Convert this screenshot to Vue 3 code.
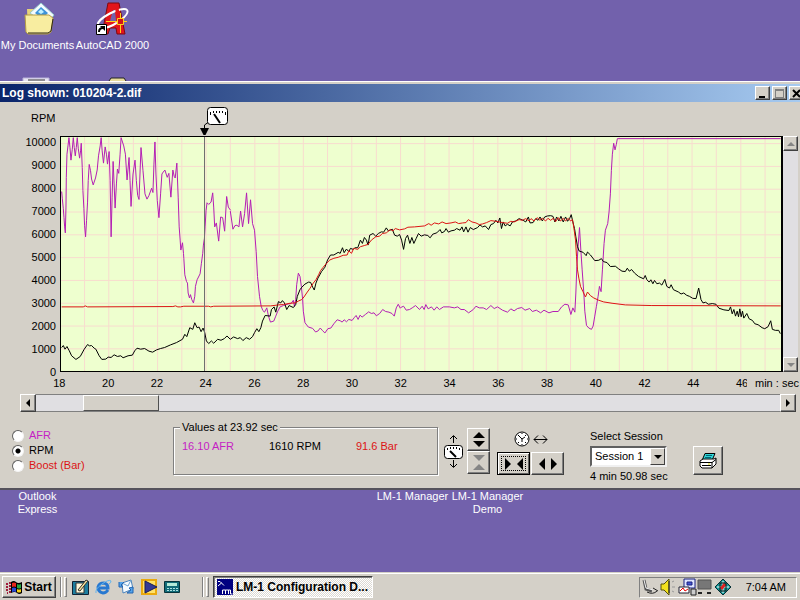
<template>
  <div class="desktop">
    <div class="icons-top">
      <a href="#" class="shortcut">
        <svg width="34" height="34" viewBox="0 0 34 34">
          <path d="M6 8h8l2 3h14v19H7z" fill="#e6d27a" />
          <path d="M9 12 20 2l13 12-8 10z" fill="#f4fbff" stroke="#9cc" />
          <path d="m14 12 6-6 7 6-6 6z" fill="#3d93d8" />
          <path d="m17 11 3-3 3 3-3 2z" fill="#bdf0ff" />
          <path d="M4 14h24l4 3-2 14-3 2H7l-2-2z" fill="#f8eda0" stroke="#b59d45" />
          <path d="M7 32h20l3-2 2-12" fill="none" stroke="#2d2712" />
        </svg>
        <span>My Documents</span>
      </a>
      <a href="#" class="shortcut">
        <svg width="34" height="34" viewBox="0 0 34 34">
          <path d="M12 2h11l6 31h-8l-1-6h-6l-2 6H6z" fill="#e3151b" stroke="#7c0b12" />
          <path d="M17 9h2l1 11h-6z" fill="#7261ac" />
          <path d="M2 25C-1 18 27 4 31 9c3 4-10 15-22 18" fill="none" stroke="#fff" stroke-width="2" />
          <path d="M13 4h9l5 28h-5l-3-26z" fill="#e3151b" />
          <path d="M24.500 12v20M10 20.500h21" stroke="#ffd21c" />
          <path d="M21.500 17.500h6v6h-6z" fill="#d0121a" stroke="#ffd21c" />
          <path d="M.5 23.500h10v10H.5z" fill="#fff" stroke="#000" />
          <path d="M3 31q0-4 4-4" fill="none" stroke="#000" stroke-width="2" />
          <path d="M4 25h5v5z" fill="#000" />
        </svg>
        <span>AutoCAD 2000</span>
      </a>
      <svg width="75" height="4" viewBox="0 0 75 4">
        <path d="M23 4V1h26v3" fill="#e8e6f4" stroke="#b9b3d8" />
        <path d="M28 3h17" stroke="#333" />
      </svg>
      <svg width="75" height="4" viewBox="0 0 75 4">
        <path d="M34 4l2-3h13l2 3" fill="#e8dc9c" stroke="#222" />
      </svg>
    </div>

    <section class="window">
      <header class="titlebar">
        <h1>Log shown: 010204-2.dif</h1>
        <button class="caption" aria-label="Minimize">
          <svg width="9" height="9"><path d="M1 7h6v2H1z" /></svg>
        </button>
        <button class="caption" aria-label="Maximize">
          <svg width="9" height="9"><path d="M0 0h9v9H0zM1 2v6h7V2z" fill-rule="evenodd" fill="#808080" /></svg>
        </button>
        <button class="caption close" aria-label="Close">
          <svg width="9" height="9"><path d="m1 1 7 7M8 1 1 8" stroke="#000" stroke-width="2" /></svg>
        </button>
      </header>

      <div class="unit">RPM</div>

      <div class="chart">
        <div class="y-axis">
          <span v-for="n in yTicks" :key="n">{{ n }}</span>
        </div>
        <div class="plot">
          <svg class="traces" viewBox="0 0 2169 708" preserveAspectRatio="none">
            <path class="grid" :d="gridPath" />
            <g v-for="trace in traces" :key="trace.name" :class="trace.name">
              <polyline
                v-for="(part, i) in trace.parts"
                :key="i"
                :points="part.points"
                :transform="`translate(${part.x} ${part.y})`"
              />
            </g>
          </svg>
          <div class="cursor" :style="{ left: cursorLeft }">
            <svg width="26" height="30" viewBox="0 0 26 30">
              <rect x="3.500" y=".5" width="20" height="17" rx="3" fill="#fff" stroke="#000" />
              <path d="M6.500 5v3M9.500 4v2M12.500 4v2M15.500 4v2M18.500 4v2M21.500 5v3" stroke="#000" />
              <path d="m10 7 6 9" stroke="#000" stroke-width="2" />
              <path d="M4 15.500.5 18v4" fill="none" stroke="#000" />
              <path d="M-4 21h9L1.500 28h-2z" />
            </svg>
          </div>
        </div>
        <div class="vscroll">
          <button aria-label="Scroll up"><i class="tri up grey"></i></button>
          <button aria-label="Scroll down"><i class="tri down grey"></i></button>
        </div>
      </div>

      <div class="x-row">
        <div class="x-axis">
          <span v-for="n in xTicks" :key="n">{{ n }}</span>
        </div>
        <span class="x-unit">min : sec</span>
      </div>

      <div class="hscroll">
        <button aria-label="Scroll left"><i class="tri left"></i></button>
        <div class="track"><div class="thumb"></div></div>
        <button aria-label="Scroll right"><i class="tri right"></i></button>
      </div>

      <div class="controls">
        <div class="channels">
          <label v-for="c in channels" :key="c.label" :class="c.color">
            <input v-model="channel" type="radio" name="channel" :value="c.label" />{{ c.label }}
          </label>
        </div>

        <fieldset class="values">
          <legend>Values at 23.92 sec</legend>
          <span class="magenta">16.10 AFR</span>
          <span>1610 RPM</span>
          <span class="red">91.6 Bar</span>
        </fieldset>

        <svg class="gauge" width="20" height="34" viewBox="0 0 20 34">
          <path d="M10.500 8V1M7 4l3.500-3.500L14 4M10.500 25v7M7 29l3.500 3.500L14 29" fill="none" stroke="#000" />
          <rect x="1.500" y="10.500" width="18" height="13" rx="3" fill="#fff" stroke="#000" />
          <path d="M4.500 13v2M7.500 12v2M10.500 12v2M13.500 12v2M16.500 13v2" stroke="#000" />
          <path d="m7 16 6 6" stroke="#000" stroke-width="2" />
        </svg>

        <div class="spin">
          <button aria-label="Expand scale"><i class="tri up big"></i><i class="tri down big"></i></button>
          <button aria-label="Compress scale" disabled>
            <i class="tri down big grey"></i><i class="tri up big grey"></i>
          </button>
        </div>

        <div class="time-zoom">
          <svg width="34" height="16" viewBox="0 0 34 16">
            <circle cx="8" cy="8" r="7" fill="#fff" stroke="#000" />
            <path d="M8 2v1M8 13v1M2 8h1M13 8h1M4 4l1 1M12 4l-1 1M4 12l1-1M12 12l-1-1" stroke="#000" />
            <path d="M5 5l3 3 3-2M8 8v3" fill="none" stroke="#000" />
            <path d="M20 8.500h13M24 4.500l-4 4 4 4M29 4.500l4 4-4 4" fill="none" stroke="#000" />
          </svg>
          <div class="pair">
            <button class="focused" aria-label="Compress time">
              <i class="tri right big"></i><i class="tri left big"></i>
            </button>
            <button aria-label="Expand time"><i class="tri left big"></i><i class="tri right big"></i></button>
          </div>
        </div>

        <div class="session">
          <label for="session">Select Session</label>
          <div class="combo">
            <select id="session" v-model="session">
              <option>Session 1</option>
            </select>
            <span class="drop"><i class="tri down"></i></span>
          </div>
          <span>4 min 50.98 sec</span>
        </div>

        <button class="print" aria-label="Print">
          <svg width="18" height="16" viewBox="0 0 18 16">
            <path d="m6 .5h10l-3 7H3z" fill="#31d5d5" stroke="#000" />
            <path d="M7 2.500h6M6 4.500h6" stroke="#067" />
            <path d="M1 8l3-2h11l2-1v6l-4 4H3l-2-2z" fill="#fff" stroke="#000" />
            <path d="M1 9.500h12l4-3M13 9v6M3 12.500h9" fill="none" stroke="#000" />
            <path d="M9 11h2" stroke="#dd0" />
          </svg>
        </button>
      </div>
    </section>

    <div class="icons-bottom">
      <a href="#" class="shortcut"><span>Outlook Express</span></a>
      <a href="#" class="shortcut manager"><span>LM-1 Manager</span></a>
      <a href="#" class="shortcut"><span>LM-1 Manager Demo</span></a>
    </div>

    <footer class="taskbar">
      <button class="start">
        <svg width="17" height="15" viewBox="0 0 17 15">
          <path d="M5 2q3-2 5 0t6 0v11q-3 2-5 0t-6 0z" fill="#000" />
          <path d="M6 3q2-1 4 0v4q-2-1-4 0z" fill="#e8261c" />
          <path d="M11 4q2 1 4 0v4q-2 1-4 0z" fill="#28a745" />
          <path d="M6 8q2-1 4 0v4q-2-1-4 0z" fill="#2649d8" />
          <path d="M11 9q2 1 4 0v3q-2 1-4 0z" fill="#f6d21c" />
          <path d="M0 4h2M3 3h2M0 7h2M3 6h2M0 10h2M3 9h2M1 13h1M3 12h2" stroke="#a01c3c" stroke-width="2" />
        </svg>
        Start
      </button>
      <i class="rule"></i><i class="grip"></i>
      <nav class="quick">
        <a href="#" aria-label="Show Desktop">
          <svg width="17" height="16" viewBox="0 0 17 16">
            <path d="M.5 2.500h16v13H.5z" fill="#1d7ea0" stroke="#123" />
            <path d="M4 4h8v10H4z" fill="#fff8dc" stroke="#333" />
            <path d="m6 11 8-10 2 1-8 10z" fill="#f5e39a" stroke="#333" />
          </svg>
        </a>
        <a href="#" aria-label="Internet Explorer">
          <svg width="17" height="16" viewBox="0 0 17 16">
            <path d="M13 11q-2 3-5 3-5-1-5-6 1-4 6-4 4 1 4 5H4" fill="none" stroke="#2878d0" stroke-width="3" />
            <path d="M1 14Q0 10 7 5t9-3q0 2-2 3" fill="none" stroke="#62b4ee" />
          </svg>
        </a>
        <a href="#" aria-label="Outlook Express">
          <svg width="17" height="16" viewBox="0 0 17 16">
            <path d="M4 4 13 1l2 9-10 4z" fill="#f5fbff" stroke="#4a83bd" />
            <path d="m4 4 6 3 3-6" fill="none" stroke="#6aa0cf" />
            <path d="M1 3v5h4L3 6l3-3M15 14V8l-4 1 2 2-4 3z" fill="#52a4ec" stroke="#2565b0" />
          </svg>
        </a>
        <a href="#" aria-label="Media Player">
          <svg width="17" height="16" viewBox="0 0 17 16">
            <path d="M1 1h14v14H1z" fill="#ffe26a" stroke="#eaa90d" stroke-width="2" />
            <path d="m4 2 12 6-12 6z" fill="#353a94" stroke="#181b55" />
          </svg>
        </a>
        <a href="#" aria-label="Calculator">
          <svg width="17" height="16" viewBox="0 0 17 16">
            <path d="M.5 2.500h15v11H.5z" fill="#116b78" stroke="#06333b" />
            <path d="M3 4h10v3H3z" fill="#b4ead9" />
            <path d="M3 9.500h11M3 11.500h11" stroke="#a9dfe0" stroke-dasharray="2 1" />
          </svg>
        </a>
      </nav>
      <i class="rule"></i><i class="grip"></i>
      <button class="task">
        <svg width="16" height="16" viewBox="0 0 16 16">
          <path d="M0 0h16v16H0z" fill="#000080" />
          <path d="M1 2.500h2l4 4M4.500 4 1 7M5.500 15v-4h3v4M8.500 11h3v4M11.500 11h2v4h2" fill="none" stroke="#fff" />
        </svg>
        LM-1 Configuration D...
      </button>
      <div class="tray">
        <svg width="92" height="18" viewBox="0 0 92 18">
          <path d="M3 2l2 9 6 2" fill="none" stroke="#555" stroke-width="3" />
          <path d="m3 2 2 8 7 2" fill="none" stroke="#f5f5f5" />
          <path d="M6 14q6 3 10-1M12 10l5 3" fill="none" stroke="#222" />
          <path d="M20 6h3l5-5v16l-5-5h-3z" fill="#f3e11c" stroke="#55500a" />
          <path d="M28 3v12" stroke="#222" />
          <path d="m31 4 2-1M31 9h3M31 13l2 1" stroke="#999" />
          <path d="M43 1h11v9H43z" fill="#dfe6ff" stroke="#1a2080" />
          <path d="M46 4h5v3h-5z" fill="#4457d0" stroke="#1a2080" />
          <path d="M38 9h10v6H38z" fill="#fff" stroke="#223" />
          <path d="m39 13 3-3 2 3 3-2" fill="none" stroke="#e00" />
          <path d="M50 11h5v6h-5z" fill="#ccc" stroke="#222" />
          <path d="M57 2h13v9H57z" fill="#777" stroke="#555" />
          <path d="M57 15h4M66 15h4" stroke="#222" stroke-width="2" />
          <path d="m82 1 8 8-8 8-8-8z" fill="#149a9a" stroke="#042f35" />
          <path d="M82 3v12M76 9h12" stroke="#fff" />
          <path d="m80 11 4-5" stroke="#d22" stroke-width="3" />
          <path d="M79 5h6v8h-6z" fill="none" stroke="#111" />
        </svg>
        <time>7:04 AM</time>
      </div>
    </footer>
  </div>
</template>

<script setup>
import { ref, computed } from 'vue'

const channel = ref('RPM')
const session = ref('Session 1')

const channels = [
  { label: 'AFR', color: 'magenta' },
  { label: 'RPM', color: 'black' },
  { label: 'Boost (Bar)', color: 'red' }
]

const yTicks = [10000, 9000, 8000, 7000, 6000, 5000, 4000, 3000, 2000, 1000, 0]
const xTicks = Array.from({ length: 15 }, (_, i) => 18 + i * 2)

// cursor position inside the visible 29.6 second range
const cursorLeft = computed(() => ((23.92 - 18.04) / 29.6) * 100 + '%')

// one line per second, one per 1000 rpm
const gridPath = computed(() => {
  let d = ''
  for (let s = 1; s < 30; s++) d += `M${Math.round(s * 73.2) - 2} 0V708`
  for (let r = 0; r < 10; r++) d += `M0 ${20 + r * 69}H2169`
  return d
})

// every trace is stored in chunks, each with its own origin
const traces = [
  {
    name: 'afr',
    parts: [
      { x: -30, y: -18, points: '32,183 34,205 37,235 39,262 41,290 43,308 45,230 46,140 48,70 51,45 54,20 57,50 60,88 64,55 67,20 70,50 73,75 76,50 79,20 82,52 86,82 89,60 91,37 94,110 96,180 99,235 101,285 104,320 107,270 110,215 112,150 115,101 119,120 122,145 127,163 134,142 139,118 143,75 148,45 151,20 154,60 158,97 163,48 167,70 170,100 175,62 178,150 181,320 184,200 187,92 190,160 193,233 197,160 200,115 204,128 208,70 211,20 219,45 224,70 229,148 235,80 238,150 241,228 247,130 253,88 257,150 261,195 265,207 271,50 277,120 283,190 289,206 295,195 303,173 307,186 310,100 313,33 316,130 320,210 325,262 330,190 334,130 338,124 343,118 350,140 355,128 361,200 367,118 371,137 374,142 379,97 383,200 386,290 389,330 391,360 396,338 399,370 400,385 403,435 408,455 411,460 413,490 417,505 420,495 424,510 429,520 433,500 435,470 440,450 449,432 453,400 457,370 459,345 462,325 464,290 467,240 470,217 475,222 482,215 487,187 490,230 493,290 498,278 505,333 511,260 517,262 523,303 529,198 534,230 541,240' },
      { x: 510, y: 132, points: '0,92 8,147 14,136 20,135 26,140 31,92 37,140 43,100 49,37 55,130 61,58 67,130 73,150 78,215 82,290 88,350 93,380 98,393 103,398 110,385 115,410 121,428 131,425 137,410 143,395 150,382 160,378 175,373 183,372 190,362 193,380 197,360 200,315 205,280 210,290 214,320 218,360 220,395 225,430 235,443 248,447 257,458 264,455 271,446 278,454 285,461 294,448 303,446 312,433 322,421 331,424 337,428 343,421 350,427 357,420 367,423 373,415 379,408 385,420 391,407 397,413 407,405 417,397 425,402 433,400 440,409 450,402 459,390 468,396 478,398 487,402 494,410 500,385 506,374 512,386' },
      { x: 1020, y: 162, points: '2,356 5,353 12,350 20,362 30,360 38,355 48,348 60,360 68,350 74,360 79,345 86,358 96,352 104,362 112,352 120,360 132,352 150,352 165,355 175,352 185,360 195,360 208,370 222,360 230,350 240,355 252,355 262,360 275,348 285,357 295,352 310,362 325,368 335,358 345,364 355,357 368,354 378,362 392,357 400,366 412,362 425,370 435,362 450,370 462,366 478,366 488,352 498,344 508,346 516,375 522,355 528,368 531,310 534,230 538,165 542,112 546,180 550,240 555,310 558,365 563,408 570,416 578,420 583,410' },
      { x: 1500, y: -18, points: '103,590 108,560 113,530 118,500 122,470 127,486 131,420 136,340 140,300 147,280 151,245 155,190 158,120 161,70 165,37 169,57 173,40 176,23 668,23' }
    ]
  },
  {
    name: 'rpm',
    parts: [
      { x: -30, y: 342, points: '32,295 37,289 42,300 48,292 55,305 62,320 75,331 88,322 100,300 110,286 116,290 122,289 130,297 135,300 145,320 153,331 165,330 172,324 181,325 190,317 200,322 210,320 217,326 232,320 245,318 252,305 259,297 270,300 282,298 295,306 306,309 318,302 330,298 342,295 360,287 378,280 396,270 403,255 409,262 418,235 427,240 433,220 440,235 446,233 452,247 458,236 463,250 468,275 475,283 483,275 490,282 502,270 512,273 522,268 530,260 540,270 550,263 562,268 570,265 578,274 588,265 598,270 607,262 613,250 620,238 626,247 632,235 637,215 645,198 660,200 664,180 672,172 677,188 685,156 692,160 697,153 703,160 710,180 717,168 730,174 737,165 742,140 750,120' },
      { x: 510, y: 132, points: '210,330 215,323 225,313 236,307 242,308 248,322 253,331 258,310 264,295 275,275 285,262 293,240 302,225 312,225 325,217 331,220 338,203 343,218 350,207 357,215 362,205 370,208 376,203 384,203 392,180 398,190 404,172 410,180 415,195 420,165 430,160 438,168 446,160 455,155 462,156 470,143 476,152 488,147 495,165 503,168 510,163' },
      { x: 1020, y: 162, points: '0,133 6,150 12,178 18,145 24,135 31,160 37,142 43,160 50,145 57,130 65,138 75,134 85,136 92,143 100,132 112,128 122,118 127,128 135,124 140,115 147,126 155,122 165,120 172,115 182,120 188,110 193,125 200,110 206,126 213,112 222,118 235,112 242,104 250,110 258,107 268,118 275,103 283,100 290,90 296,98 302,83 307,115 312,95 318,107 325,102 333,107 340,95 350,92 360,85 372,90 380,95 388,80 393,98 402,97 410,85 417,90 423,80 430,92 437,80 445,77 455,76 462,78 468,95 473,80 480,92 486,78 493,95 500,80 506,93 512,85 517,73 522,95 527,115 531,140 536,170 541,183 553,187 562,197 566,186 575,195 588,212 600,211' },
      { x: 1500, y: -18, points: '120,391 128,386 134,395 145,398 155,410 170,409 180,417 190,424 200,425 206,415 212,424 219,419 228,430 240,440 255,447 260,437 265,450 272,457 277,450 283,462 288,452 295,462 303,460 310,466 319,449 325,470 333,475 338,465 345,480 360,487 368,493 376,490 385,497 393,500 403,506 413,507 421,475 428,510 434,520 442,518 450,524 462,522 473,524 482,536 497,541 512,543 517,532 522,553 527,540 532,560 537,545 541,562 545,538 549,562 553,545 557,566 566,552 573,568 583,573 590,583 600,586 612,595 620,598 630,592 638,574 643,600 652,603 662,603 667,613' }
    ]
  },
  {
    name: 'boost',
    parts: [
      { x: -30, y: 342, points: '32,172 97,172 103,169 110,172 367,171 375,169 382,172 390,172 400,170 475,170 481,172 490,170 662,169' },
      { x: 510, y: 132, points: '122,379 145,376 160,375 180,371 195,370 206,364 215,360 222,352 230,340 240,326 250,310 258,300 266,285 272,272 280,262 290,250 300,240 312,235 325,232 340,226 352,225 357,212 365,220 372,205 384,208 392,200 405,196 415,193 425,180 438,170 450,168 458,160 470,158 482,148 490,152 497,145 510,149' },
      { x: 1020, y: 162, points: '0,119 15,116 25,111 45,110 75,107 88,100 95,105 105,98 118,101 128,95 140,100 155,98 168,95 178,100 190,98 200,97 207,88 218,95 230,98 240,103 250,101 262,97 275,91 290,93 310,97 325,99 335,93 345,95 360,88 370,90 380,85 390,92 396,85 405,92 415,82 422,90 430,84 440,92 447,84 455,90 463,84 470,94 478,82 485,92 493,84 500,92 508,84 515,92 521,88 526,120 530,150 533,200 536,240 540,265 545,290 552,305 560,322 566,307 575,318 585,325 600,332' },
      { x: 1500, y: -18, points: '120,512 135,517 160,521 200,526 280,528 668,529' }
    ]
  }
]
</script>

<style>
body {
  margin: 0;
}
</style>

<style scoped>
.desktop {
  min-height: 100vh;
  display: flex;
  flex-direction: column;
  overflow: hidden;
  background: #7261ac;
  color: #000;
  font: 11px/13px 'Liberation Sans', Arial, sans-serif;
}

button,
select {
  font: inherit;
  color: inherit;
}

button {
  display: flex;
  align-items: center;
  justify-content: center;
  box-sizing: border-box;
  padding: 0;
  background: #d4d0c8;
  border: 1px solid;
  border-color: #fff #404040 #404040 #fff;
  box-shadow: inset -1px -1px #808080;
}

svg {
  display: block;
  flex: none;
}

/* desktop shortcuts */
.icons-top {
  display: grid;
  grid-template-columns: 75px 75px;
  align-content: space-between;
  height: 81px;
}

.shortcut {
  display: flex;
  flex-direction: column;
  align-items: center;
  width: 75px;
  color: #fff;
  text-align: center;
  text-decoration: none;
}

.icons-top .shortcut {
  gap: 4px;
  padding-top: 1px;
  white-space: nowrap;
}

.icons-bottom {
  display: flex;
  flex: 1;
}

.manager {
  margin-left: 300px;
}

.manager span {
  white-space: nowrap;
}

/* log window */
.window {
  display: flex;
  flex-direction: column;
  background: #d4d0c8;
  border-top: 1px solid #fff;
  border-bottom: 2px solid #55525c;
}

.titlebar {
  display: flex;
  align-items: center;
  gap: 2px;
  height: 18px;
  margin-top: 2px;
  padding-left: 2px;
  overflow: hidden;
  background: linear-gradient(to right, #0a246a, #a6caf0);
}

.titlebar h1 {
  flex: 1;
  margin: 0;
  color: #fff;
  font-size: 12px;
}

.caption {
  flex: none;
  width: 15px;
  height: 14px;
}

.close {
  margin-right: -4px;
}

.unit {
  padding: 10px 0 11px 31px;
}

.chart {
  display: flex;
  height: 236px;
}

.y-axis {
  display: flex;
  flex-direction: column;
  justify-content: space-between;
  width: 56px;
  margin: 0 4px -7px 0;
  text-align: right;
}

.plot {
  position: relative;
  flex: 1;
  box-sizing: border-box;
  background: #eeffcf;
  border: 1px solid #000;
  border-width: 1px 2px 1px 1px;
}

.traces {
  width: 100%;
  height: 100%;
  shape-rendering: crispEdges;
}

.traces path,
.traces polyline {
  fill: none;
  vector-effect: non-scaling-stroke;
}

.grid {
  stroke: #f8dccf;
}

.afr {
  stroke: #b41eb4;
}

.rpm {
  stroke: #000;
}

.boost {
  stroke: #dc1414;
}

.cursor {
  position: absolute;
  top: 0;
  bottom: 0;
  width: 1px;
  background: #707070;
}

.cursor svg {
  position: absolute;
  bottom: 100%;
  left: 0;
  overflow: visible;
}

.vscroll {
  display: flex;
  flex-direction: column;
  justify-content: space-between;
  width: 15px;
  margin-right: 2px;
  background: #e0dfe2;
}

.vscroll button {
  height: 15px;
}

.x-row {
  display: flex;
  padding: 5px 2px 4px 35px;
}

.x-axis {
  display: flex;
  flex: 1;
  min-width: 0;
  overflow: hidden;
}

.x-axis span {
  flex: 0 0 6.85%;
  text-align: center;
}

.x-unit {
  width: 43px;
  margin-left: 8px;
  white-space: nowrap;
}

.hscroll {
  display: flex;
  height: 18px;
  margin: 0 4px 0 20px;
}

.hscroll button {
  width: 16px;
}

.track {
  display: flex;
  flex: 1;
  padding-left: 6%;
  background: #e0dfe2;
  border: solid #808080;
  border-width: 1px 0;
}

.thumb {
  width: 11%;
  box-sizing: border-box;
  background: #d4d0c8;
  border: 1px solid;
  border-color: #fff #505050 #505050 #fff;
}

/* arrow glyphs */
.tri {
  width: 0;
  height: 0;
  border: 4px solid transparent;
}

.tri.big {
  border-width: 6px;
}

.up {
  border-top: 0 !important;
  border-bottom-color: #000;
}

.down {
  border-bottom: 0 !important;
  border-top-color: #000;
}

.left {
  border-left: 0 !important;
  border-right-color: #000;
}

.right {
  border-right: 0 !important;
  border-left-color: #000;
}

.up.grey {
  border-bottom-color: #858585;
}

.down.grey {
  border-top-color: #858585;
}

/* bottom controls */
.controls {
  display: flex;
  align-items: flex-start;
  padding: 9px 0 5px 12px;
}

.channels {
  display: flex;
  flex-direction: column;
  gap: 2px;
  width: 161px;
  padding-top: 8px;
}

.channels label {
  display: flex;
  align-items: center;
  gap: 5px;
}

.channels input {
  appearance: none;
  width: 12px;
  height: 12px;
  box-sizing: border-box;
  margin: 0;
  background: #fff;
  border: 1px solid;
  border-color: #606060 #f4f4f4 #f4f4f4 #606060;
  border-radius: 50%;
}

.channels input:checked {
  background: radial-gradient(#000 2px, #fff 3px);
}

.magenta {
  color: #c41ec4;
}

.red {
  color: #dc1414;
}

.values {
  display: flex;
  width: 265px;
  min-width: 0;
  height: 54px;
  box-sizing: border-box;
  margin: 0;
  padding: 6px 0 6px 8px;
  border: 1px solid #808080;
  box-shadow: 1px 1px #fff, inset 1px 1px #fff;
}

.values legend {
  padding: 0 2px;
  margin-left: -2px;
  background: #d4d0c8;
}

.values span {
  flex: 0 0 87px;
}

.values span:last-child {
  flex: 1;
}

.gauge {
  margin: 14px 0 0 5px;
}

.spin {
  width: 23px;
  margin: 7px 7px 0 4px;
}

.spin button {
  flex-direction: column;
  gap: 3px;
  width: 23px;
  height: 23px;
}

.time-zoom {
  display: flex;
  flex-direction: column;
  align-items: center;
  gap: 5px;
  padding-top: 10px;
}

.pair {
  display: flex;
  gap: 1px;
}

.pair button {
  gap: 6px;
  width: 33px;
  height: 23px;
}

.pair .focused {
  border: 1px solid #000;
  outline: 1px dotted #000;
  outline-offset: -5px;
  box-shadow: inset 1px 1px #fff, inset -1px -1px #606060;
}

.session {
  display: flex;
  flex-direction: column;
  gap: 3px;
  width: 77px;
  margin-left: 26px;
  padding-top: 9px;
  white-space: nowrap;
}

.combo {
  position: relative;
  display: flex;
}

.combo select {
  appearance: none;
  width: 77px;
  height: 21px;
  padding: 0 3px;
  background: #fff;
  border: 2px solid;
  border-color: #606060 #f0f0f0 #f0f0f0 #606060;
  border-radius: 0;
}

.drop {
  position: absolute;
  top: 2px;
  right: 2px;
  display: flex;
  align-items: center;
  justify-content: center;
  width: 15px;
  height: 17px;
  box-sizing: border-box;
  background: #d4d0c8;
  border: 1px solid;
  border-color: #fff #404040 #404040 #fff;
  pointer-events: none;
}

.print {
  width: 30px;
  height: 29px;
  margin: 25px 0 0 26px;
}

/* taskbar */
.taskbar {
  display: flex;
  align-items: center;
  height: 24px;
  padding: 1px 3px 1px 2px;
  background: #d4d0c8;
  border-top: 1px solid #fff;
  box-shadow: 0 -1px #d4d0c8;
}

.start {
  gap: 1px;
  width: 54px;
  height: 22px;
  font-size: 12px;
  font-weight: bold;
}

.rule {
  height: 20px;
  margin-left: 4px;
  border-left: 1px solid #808080;
  border-right: 1px solid #fff;
}

.grip {
  width: 1px;
  height: 18px;
  margin-left: 2px;
  border: 1px solid;
  border-color: #fff #808080 #808080 #fff;
}

.quick {
  display: flex;
  gap: 6px;
  margin: 0 17px 0 5px;
}

.task {
  justify-content: flex-start;
  gap: 3px;
  width: 160px;
  height: 22px;
  margin-left: 4px;
  padding-left: 3px;
  overflow: hidden;
  background: repeating-conic-gradient(#fff 0 25%, #dcd9d3 0 50%) 0 0 / 2px 2px;
  border-color: #404040 #fff #fff #404040;
  box-shadow: inset 1px 1px #808080;
  font-size: 12px;
  font-weight: bold;
  white-space: nowrap;
}

.tray {
  display: flex;
  align-items: center;
  justify-content: space-between;
  width: 158px;
  height: 21px;
  box-sizing: border-box;
  margin-left: auto;
  padding: 0 10px 0 1px;
  border: 1px solid;
  border-color: #808080 #fff #fff #808080;
}
</style>
